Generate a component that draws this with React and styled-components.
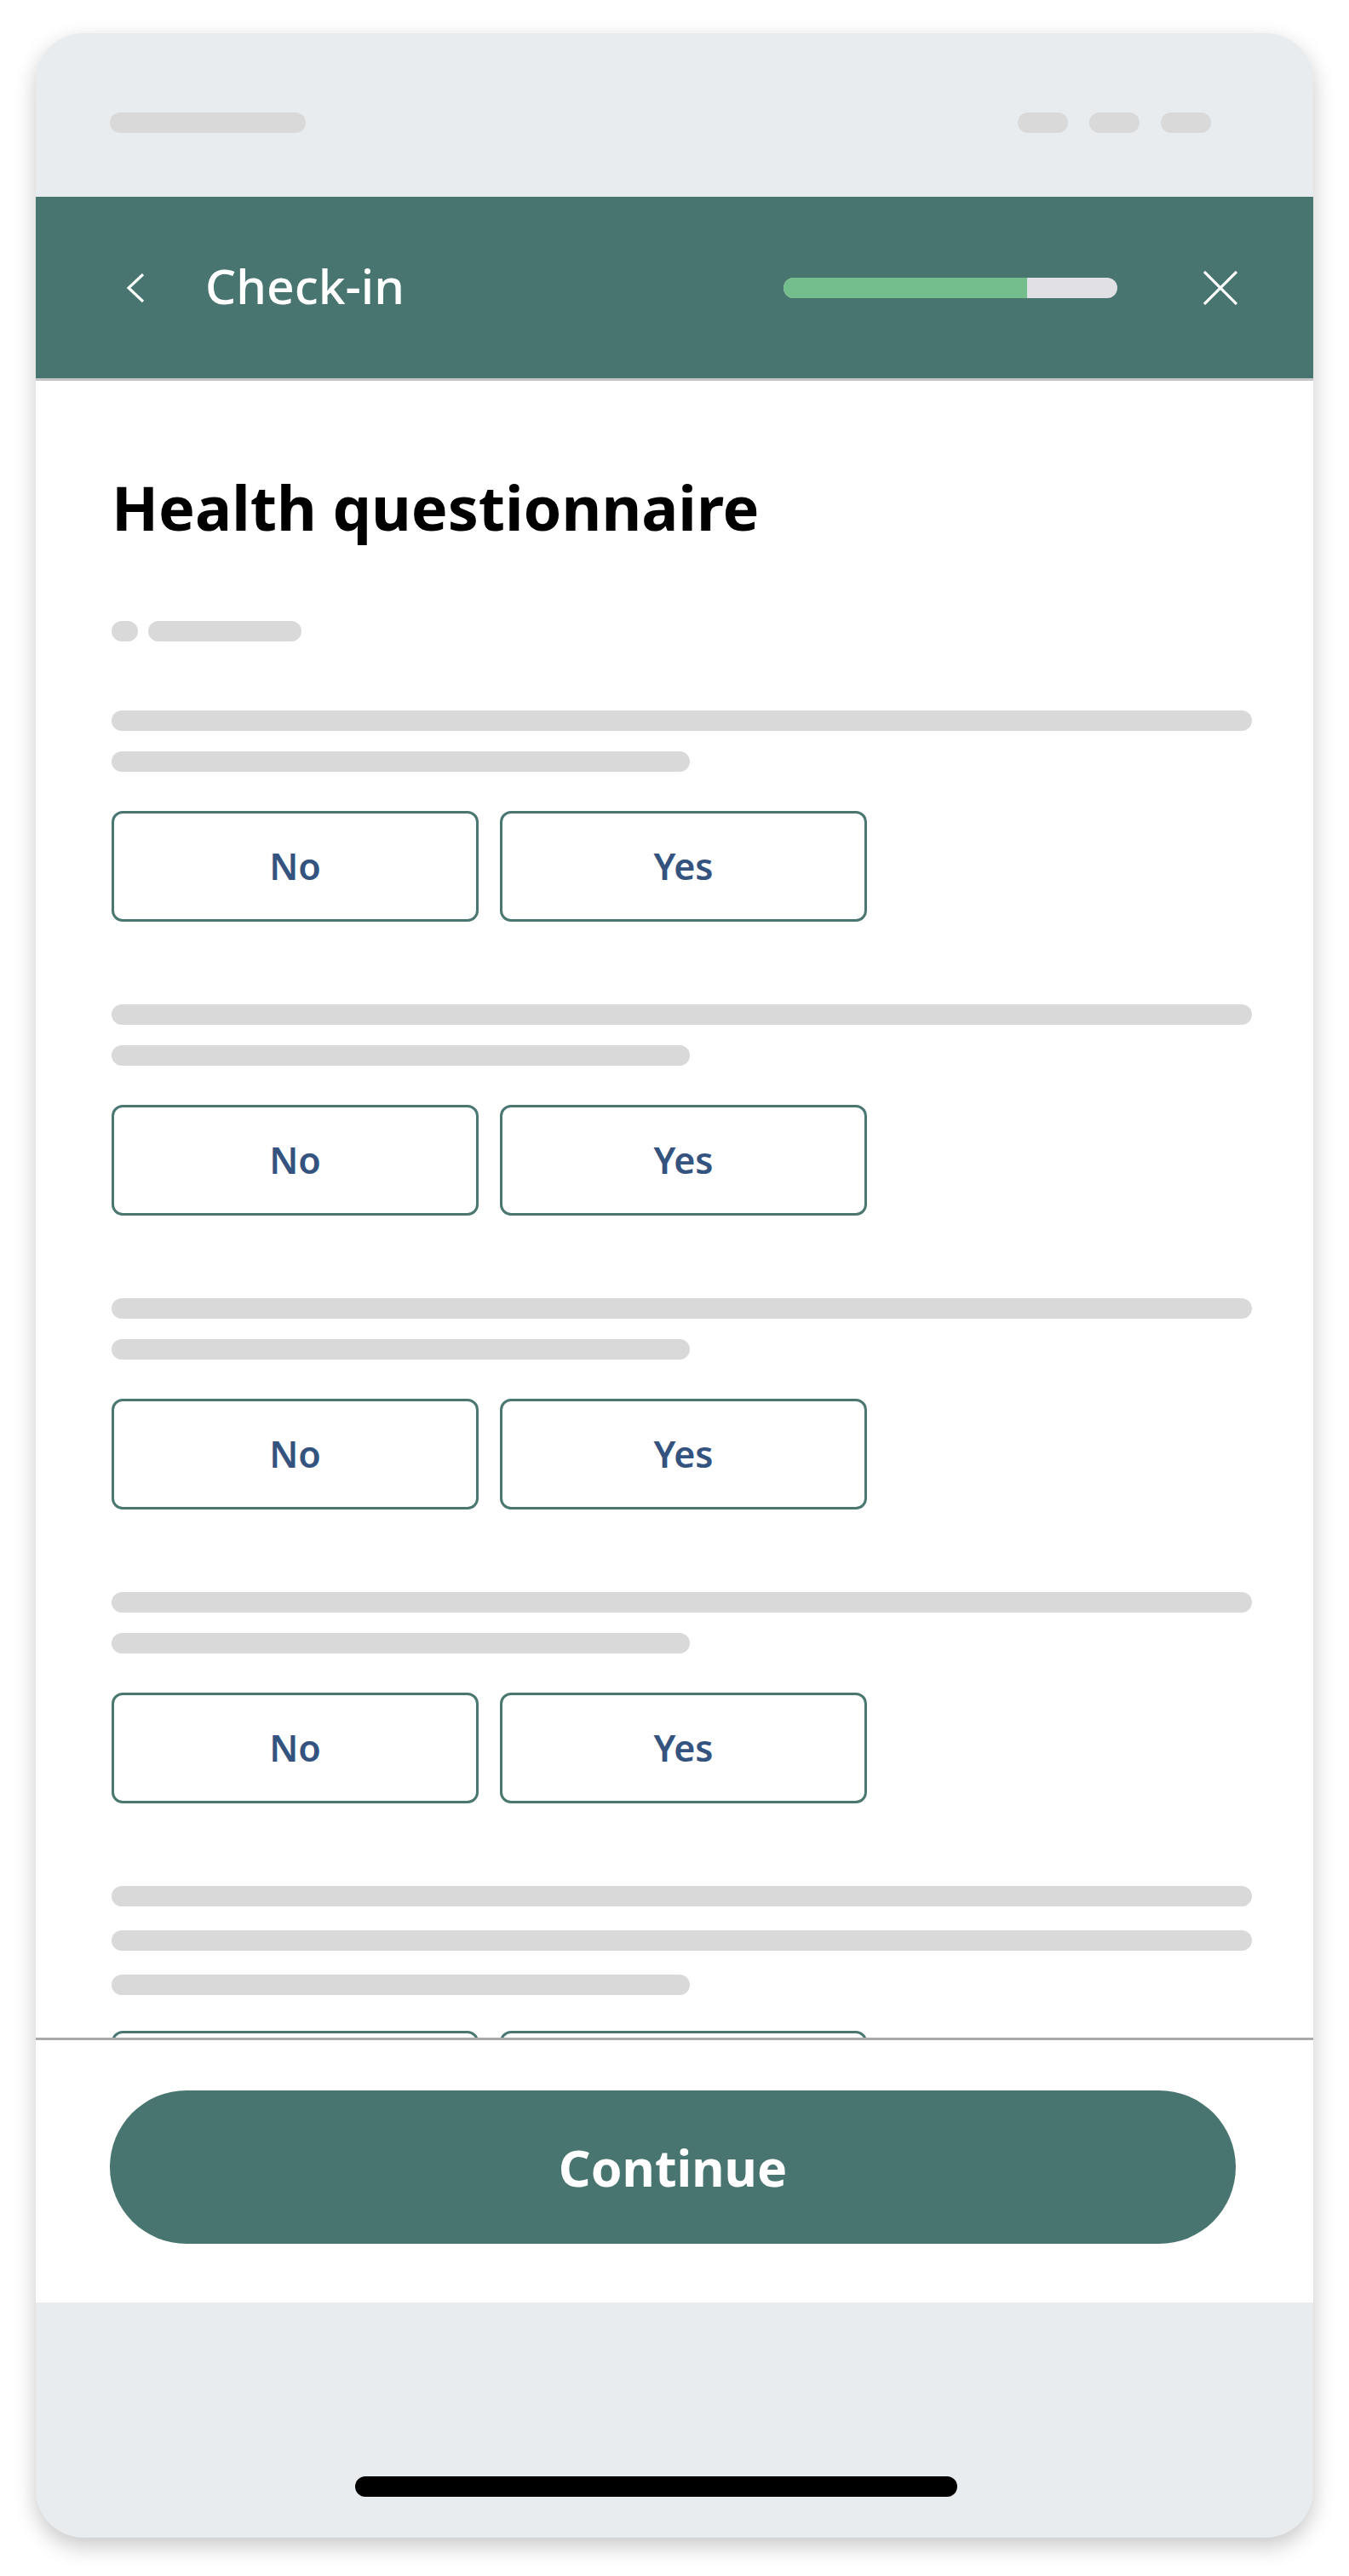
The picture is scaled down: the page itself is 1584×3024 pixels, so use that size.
import React from "react";
import styled, { createGlobalStyle } from "styled-components";

const GlobalStyle = createGlobalStyle`
  html, body {
    margin: 0;
    padding: 0;
    background: #ffffff;
    font-family: "Noto Sans", "Open Sans", sans-serif;
  }
`;

const Page = styled.div`
  width: 1584px;
  height: 3024px;
  padding-top: 39px;
  box-sizing: border-box;
`;

const Phone = styled.div`
  width: 1500px;
  height: 2940px;
  margin: 0 auto;
  border-radius: 56px;
  overflow: hidden;
  background: #e9ecef;
  box-shadow: 0 10px 26px rgba(0, 0, 0, 0.22);
  display: flex;
  flex-direction: column;
`;

const StatusBar = styled.div`
  height: 192px;
  flex-shrink: 0;
  box-sizing: border-box;
  padding: 93px 120px 0 87px;
  display: flex;
  justify-content: space-between;
  align-items: flex-start;
`;

const StatusIcons = styled.div`
  display: flex;
  gap: 25px;
`;

const Pill = styled.div`
  width: ${(p) => p.w}px;
  height: 24px;
  border-radius: 12px;
  background: #d9d9d9;
`;

const Header = styled.header`
  height: 216px;
  flex-shrink: 0;
  box-sizing: border-box;
  background: #48756f;
  border-bottom: 3px solid #c4c6c6;
  display: flex;
  align-items: center;
  padding: 0 89px 0 106px;
`;

const IconButton = styled.button`
  background: none;
  border: 0;
  padding: 0;
  display: flex;
  align-items: center;
  justify-content: center;
  cursor: pointer;
`;

const HeaderTitle = styled.h2`
  margin: 0 0 0 71px;
  color: #ffffff;
  font-size: 57px;
  font-weight: 500;
  line-height: 1;
  flex: 1;
  padding-bottom: 4px;
`;

const Progress = styled.div`
  width: 392px;
  height: 24px;
  border-radius: 12px;
  background: #e1e0e5;
  overflow: hidden;
  margin-right: 101px;
`;

const ProgressFill = styled.div`
  height: 100%;
  background: #74bd8d;
`;

const Scroll = styled.main`
  height: 1945px;
  flex-shrink: 0;
  overflow: hidden;
  background: #ffffff;
  box-sizing: border-box;
  padding: 105px 72px 0 89px;
`;

const Title = styled.h1`
  margin: 0;
  font-size: 72px;
  font-weight: 700;
  line-height: 1.2;
  color: #000000;
`;

const MetaRow = styled.div`
  display: flex;
  gap: 12px;
  margin-top: 91px;
`;

const Question = styled.section`
  margin-top: ${(p) => p.top}px;
  display: flex;
  flex-direction: column;
`;

const Lines = styled.div`
  display: flex;
  flex-direction: column;
  gap: ${(p) => p.gap}px;
`;

const Line = styled.div`
  height: 24px;
  border-radius: 12px;
  background: #d9d9d9;
  width: ${(p) => (p.short ? "679px" : "100%")};
`;

const Choices = styled.div`
  display: flex;
  gap: 25px;
  margin-top: ${(p) => p.top}px;
`;

const Choice = styled.button`
  width: 431px;
  height: 130px;
  box-sizing: border-box;
  background: #ffffff;
  border: 3px solid #4a7770;
  border-radius: 13px;
  color: #34537f;
  font-family: "Noto Sans", "Open Sans", sans-serif;
  font-size: 43px;
  font-weight: 600;
  display: flex;
  align-items: center;
  justify-content: center;
  padding: 0 0 2px;
  cursor: pointer;
`;

const Footer = styled.footer`
  height: 311px;
  flex-shrink: 0;
  box-sizing: border-box;
  background: #ffffff;
  border-top: 3px solid #a9a9a9;
  padding: 59px 91px 0 87px;
`;

const PrimaryButton = styled.button`
  width: 100%;
  height: 180px;
  border: 0;
  border-radius: 90px;
  background: #48756f;
  color: #ffffff;
  font-family: "Noto Sans", "Open Sans", sans-serif;
  font-size: 59px;
  font-weight: 700;
  padding: 0 0 1px;
  cursor: pointer;
`;

const HomeArea = styled.div`
  flex: 1;
  padding: 204px 0 0 375px;
  box-sizing: border-box;
`;

const HomeIndicator = styled.div`
  width: 707px;
  height: 24px;
  border-radius: 12px;
  background: #000000;
`;

// last question sits under the footer, so its answers are scrolled out of view
const questions = [
  { lines: 2, gap: 24, top: 81 },
  { lines: 2, gap: 24, top: 97 },
  { lines: 2, gap: 24, top: 97 },
  { lines: 2, gap: 24, top: 97 },
  { lines: 3, gap: 28, top: 97, choicesTop: 42, hidden: true },
];

function QuestionBlock({ q }) {
  const rows = Array.from({ length: q.lines }, (_, i) => i === q.lines - 1);
  return (
    <Question top={q.top}>
      <Lines gap={q.gap}>
        {rows.map((short, i) => (
          <Line key={i} short={short} />
        ))}
      </Lines>
      <Choices top={q.choicesTop || 46}>
        <Choice aria-label="No">{q.hidden ? null : "No"}</Choice>
        <Choice aria-label="Yes">{q.hidden ? null : "Yes"}</Choice>
      </Choices>
    </Question>
  );
}

export default function App() {
  const progress = 73;
  return (
    <>
      <GlobalStyle />
      <Page>
        <Phone>
          <StatusBar>
            <Pill w={230} />
            <StatusIcons>
              <Pill w={59} />
              <Pill w={59} />
              <Pill w={59} />
            </StatusIcons>
          </StatusBar>

          <Header>
            <IconButton aria-label="Back">
              <svg width="22" height="34" viewBox="0 0 22 34" fill="none">
                <polyline points="20,1 3,17 20,33" stroke="#fff" strokeWidth="3.2" />
              </svg>
            </IconButton>
            <HeaderTitle>Check-in</HeaderTitle>
            <Progress>
              <ProgressFill style={{ width: `${progress}%` }} />
            </Progress>
            <IconButton aria-label="Close">
              <svg width="40" height="40" viewBox="0 0 40 40" fill="none">
                <path d="M1 1 L39 39 M39 1 L1 39" stroke="#fff" strokeWidth="3.2" />
              </svg>
            </IconButton>
          </Header>

          <Scroll>
            <Title>Health questionnaire</Title>
            <MetaRow>
              <Pill w={31} />
              <Pill w={180} />
            </MetaRow>
            {questions.map((q, i) => (
              <QuestionBlock key={i} q={q} />
            ))}
          </Scroll>

          <Footer>
            <PrimaryButton>Continue</PrimaryButton>
          </Footer>

          <HomeArea>
            <HomeIndicator />
          </HomeArea>
        </Phone>
      </Page>
    </>
  );
}
